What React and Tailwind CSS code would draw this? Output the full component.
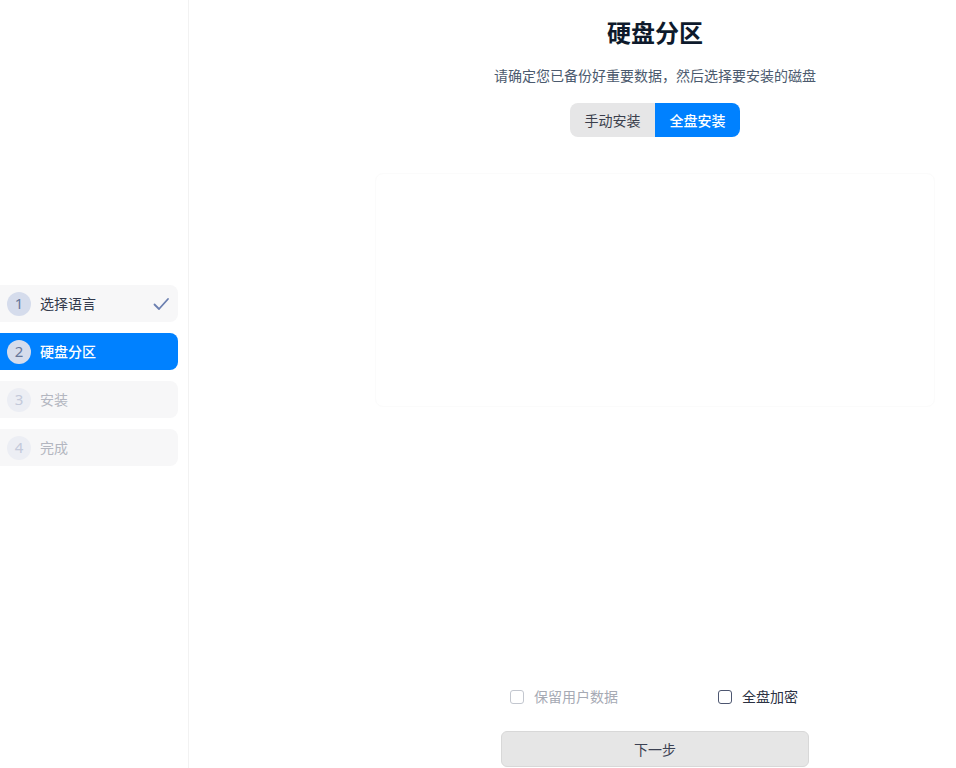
const steps = [
  { n: 1, label: '选择语言', state: 'done' },
  { n: 2, label: '硬盘分区', state: 'active' },
  { n: 3, label: '安装', state: 'todo' },
  { n: 4, label: '完成', state: 'todo' },
];

const StepItem = ({ step }) => {
  const active = step.state === 'active';
  const todo = step.state === 'todo';
  return (
    <div
      className={`-ml-2 flex h-[37px] w-[186px] items-center rounded-lg pl-[15px] pr-2 ${
        active ? 'bg-[#0081ff]' : 'bg-[#f7f7f8]'
      }`}
    >
      <span
        className={`flex h-6 w-6 items-center justify-center rounded-full text-[15px] ${
          todo ? 'bg-[#eceef4] text-[#c3c9da]' : 'bg-[#d5dcec] text-[#66769a]'
        }`}
      >
        {step.n}
      </span>
      <span
        className={`ml-[9px] text-[14px] ${
          active ? 'text-white font-medium' : todo ? 'text-[#b3b6c0]' : 'text-[#333a4c]'
        }`}
      >
        {step.label}
      </span>
      {step.state === 'done' && (
        <svg className="ml-auto" width="18" height="18" viewBox="0 0 18 18" fill="none">
          <path d="M2.5 9.5 L7 14 L16 4" stroke="#6b7fb0" strokeWidth="1.8" strokeLinecap="round" strokeLinejoin="round" />
        </svg>
      )}
    </div>
  );
};

const App = () => {
  return (
    <div
      className="flex h-[768px] w-[956px] overflow-hidden bg-white"
      style={{ fontFamily: '"Noto Sans", "Noto Sans CJK SC", sans-serif' }}
    >
      <aside className="flex w-[189px] shrink-0 flex-col gap-[11px] border-r border-[#f2f2f2] pt-[285px]">
        {steps.map((s) => (
          <StepItem key={s.n} step={s} />
        ))}
      </aside>

      <main className="flex flex-1 flex-col">
        <div className="ml-[186px] flex w-[560px] flex-1 flex-col items-center">
          <h1 className="mt-[16px] text-[24px] font-bold leading-[34px] text-[#0e1a2c]">硬盘分区</h1>
          <p className="mt-[16px] text-[14px] leading-[20px] text-[#4b5a6e]">
            请确定您已备份好重要数据，然后选择要安装的磁盘
          </p>
          <div className="mt-[17px] flex h-[34px] overflow-hidden rounded-lg text-[14px]">
            <button className="w-[85px] bg-[#e6e6e7] text-[#3a3e4c]">手动安装</button>
            <button className="w-[85px] bg-[#0081ff] font-medium text-white">全盘安装</button>
          </div>
          <div className="mt-[36px] h-[234px] w-full rounded-lg border border-[#fbfbfb]" />

          <div className="mt-auto flex w-[290px] items-center justify-between pr-[2px] text-[14px]">
            <label className="flex items-center gap-[10px] text-[#a6aab4]">
              <span className="h-[14px] w-[14px] rounded-[3px] border-[1.5px] border-[#c3c7cf]" />
              保留用户数据
            </label>
            <label className="flex items-center gap-[10px] text-[#2b3142]">
              <span className="h-[14px] w-[14px] rounded-[3px] border-[1.5px] border-[#4d5670]" />
              全盘加密
            </label>
          </div>
          <button className="mb-[1px] mt-[24px] h-[36px] w-[308px] rounded-md border border-[#d8d8d8] bg-[#e6e6e6] text-[14px] text-[#3b4152]">
            下一步
          </button>
        </div>
      </main>
    </div>
  );
};

export default App;
